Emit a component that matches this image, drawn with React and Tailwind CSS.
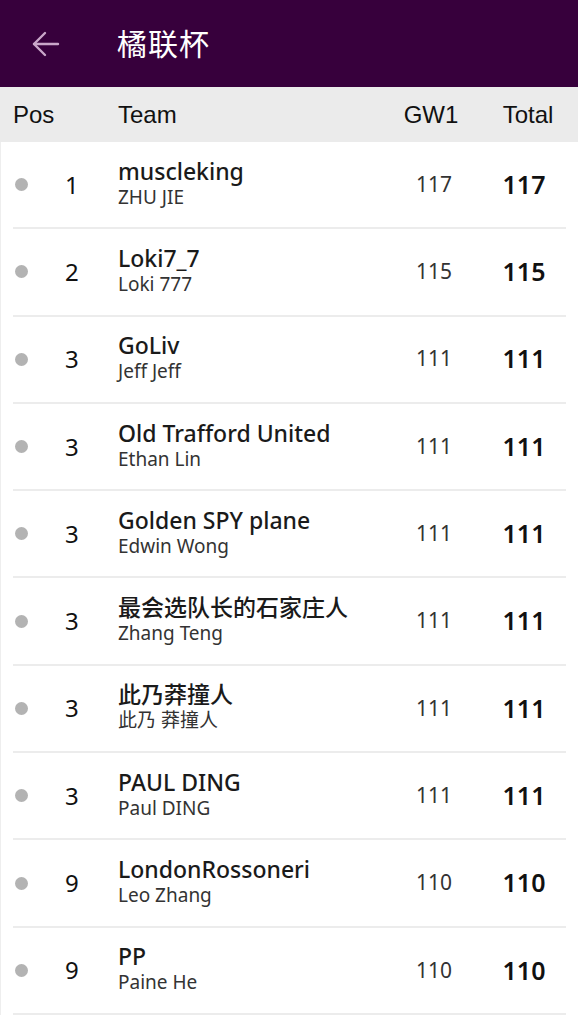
import React from "react";

const rows = [
  { pos: 1, team: "muscleking", manager: "ZHU JIE", gw: 117, total: 117 },
  { pos: 2, team: "Loki7_7", manager: "Loki 777", gw: 115, total: 115 },
  { pos: 3, team: "GoLiv", manager: "Jeff Jeff", gw: 111, total: 111 },
  { pos: 3, team: "Old Trafford United", manager: "Ethan Lin", gw: 111, total: 111 },
  { pos: 3, team: "Golden SPY plane", manager: "Edwin Wong", gw: 111, total: 111 },
  { pos: 3, team: "最会选队长的石家庄人", manager: "Zhang Teng", gw: 111, total: 111 },
  { pos: 3, team: "此乃莽撞人", manager: "此乃 莽撞人", gw: 111, total: 111 },
  { pos: 3, team: "PAUL DING", manager: "Paul DING", gw: 111, total: 111 },
  { pos: 9, team: "LondonRossoneri", manager: "Leo Zhang", gw: 110, total: 110 },
  { pos: 9, team: "PP", manager: "Paine He", gw: 110, total: 110 },
];

const font = { fontFamily: '"Noto Sans", "Noto Sans CJK SC", sans-serif' };

export default function App() {
  return (
    <div className="w-[578px] h-[1024px] overflow-hidden bg-white" style={font}>
      {/* top bar */}
      <header className="h-[87px] bg-[#37003c] flex items-center">
        <svg width="28" height="26" viewBox="0 0 28 26" className="ml-[32px]" fill="none" stroke="#c9a6c9" strokeWidth="2.4" strokeLinecap="round" strokeLinejoin="round">
          <path d="M26 13H2" />
          <path d="M13 2L2 13l11 11" />
        </svg>
        <h1 className="ml-[57px] text-[30px] text-white tracking-[1px] leading-none">橘联杯</h1>
      </header>

      {/* column headings */}
      <div className="h-[55px] bg-[#ebebeb] flex items-center text-[24px] text-[#111]" style={{ fontFamily: '"Liberation Sans", sans-serif' }}>
        <div className="w-[118px] pl-[13px]">Pos</div>
        <div className="flex-1">Team</div>
        <div className="w-[88px] text-center">GW1</div>
        <div className="w-[10px]" />
        <div className="w-[86px] text-center">Total</div>
        <div className="w-[7px]" />
      </div>

      {/* standings */}
      <div className="border-l border-[#eeeeee]">
        {rows.map((r, i) => (
          <div key={i} className="h-[87.3px] flex flex-col">
            <div className="flex-1 flex items-center">
              <div className="w-[13px] h-[13px] rounded-full bg-[#b3b3b3] ml-[14px]" />
              <div className="w-[90px] pl-[37px] text-[24px] text-[#111]">{r.pos}</div>
              <div className="flex-1 min-w-0 flex flex-col -mt-[4px]">
                <span className="text-[23px] leading-[28px] font-medium text-[#1a1a1a] whitespace-nowrap">{r.team}</span>
                <span className="text-[19px] leading-[24px] text-[#333] whitespace-nowrap">{r.manager}</span>
              </div>
              <div className="w-[100px] text-center text-[21px] text-[#333]">{r.gw}</div>
              <div className="w-[80px] text-center text-[25px] font-semibold text-[#111]">{r.total}</div>
              <div className="w-[14px]" />
            </div>
            <div className="mx-[12px] h-[2px] bg-[#ececec]" />
          </div>
        ))}
      </div>
    </div>
  );
}
